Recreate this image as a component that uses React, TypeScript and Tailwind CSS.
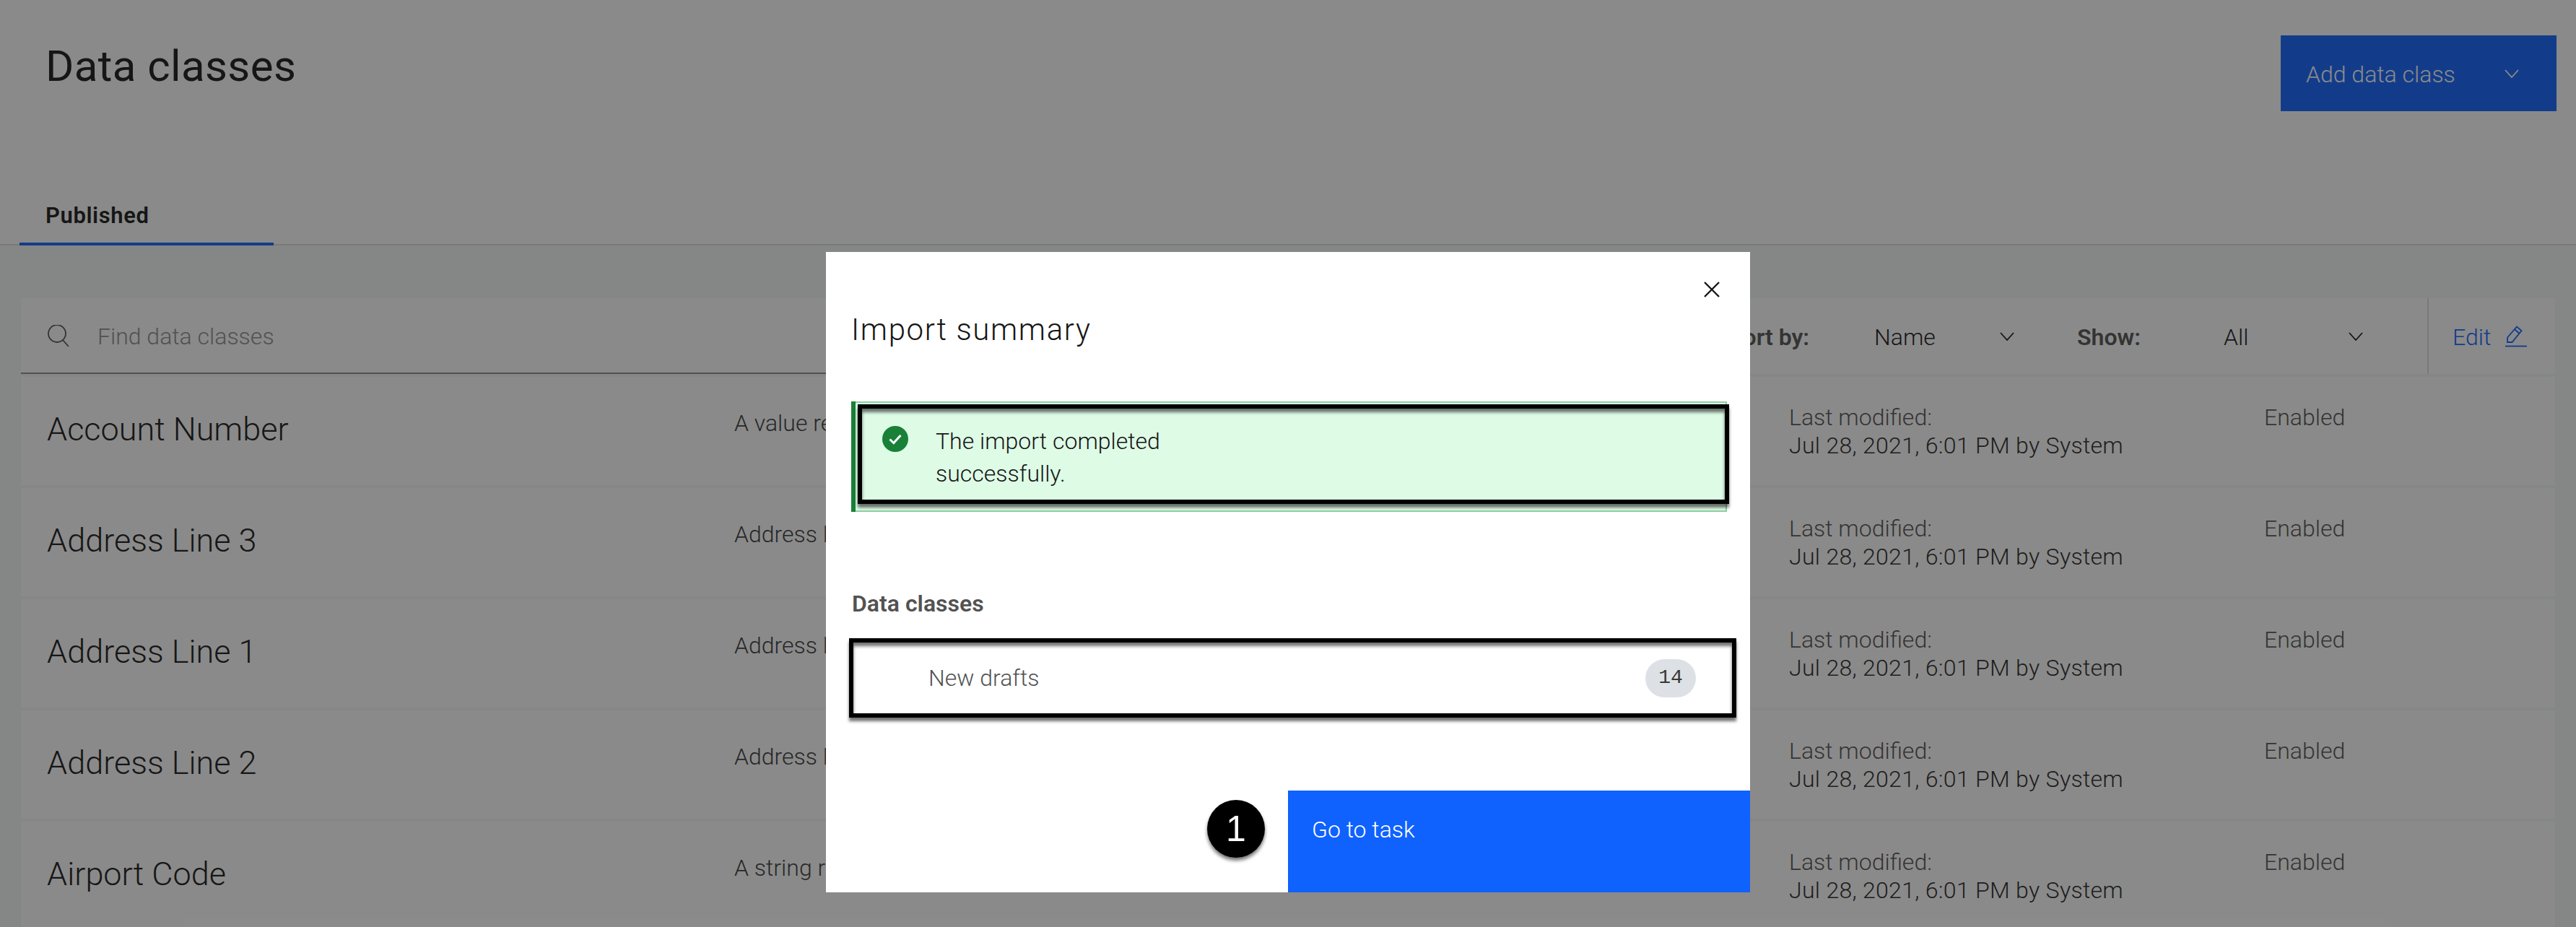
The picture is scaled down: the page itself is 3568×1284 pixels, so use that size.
const rows = [
  { name: 'Account Number', description: 'A value re' },
  { name: 'Address Line 3', description: 'Address l' },
  { name: 'Address Line 1', description: 'Address l' },
  { name: 'Address Line 2', description: 'Address l' },
  { name: 'Airport Code', description: 'A string r' },
];

function Chevron({ className }: { className: string }) {
  return (
    <svg viewBox="0 0 20 12" className={className} fill="none" stroke="currentColor" strokeWidth="1.8">
      <polyline points="1,1 10,11 19,1" />
    </svg>
  );
}

function Row({ name, description }: { name: string; description: string }) {
  return (
    <div className="flex h-[150px] bg-white pl-[36px] shrink-0">
      <div className="w-[952px] pt-[48px] text-[45px] leading-[50px] text-[#161616]">{name}</div>
      <div className="w-[1461px] pt-[46px] text-[32px] leading-[36px] text-[#393939]">{description}</div>
      <div className="w-[658px] pt-[37px] text-[32px] leading-[39px]">
        <div className="text-[#525252]">Last modified:</div>
        <div className="text-[#262626] tracking-[0.3px]">Jul 28, 2021, 6:01 PM by System</div>
      </div>
      <div className="pt-[37px] text-[32px] leading-[39px] text-[#525252]">Enabled</div>
    </div>
  );
}

function Page() {
  return (
    <div className="flex flex-col h-[1284px] bg-[#f4f8f6]">
      {/* Header */}
      <div className="relative h-[340px] shrink-0 bg-white border-b-2 border-[#dcdcdc]">
        <div className="flex justify-between pl-[63px] pr-[27px] pt-[49px]">
          <h1 className="pt-[8px] text-[60px] leading-[70px] font-normal text-[#161616] tracking-[0.4px]">Data classes</h1>
          <div className="flex items-center justify-between w-[382px] h-[105px] bg-[#0f62fe] pl-[35px] pr-[52px] text-[32px] text-white">
            <span className="pt-[2px]">Add data class</span>
            <Chevron className="w-[20px] h-[12px]" />
          </div>
        </div>
        <div className="absolute left-[27px] bottom-[-2px] w-[352px] h-[86px] border-b-[4px] border-[#0f62fe] pl-[36px] pt-[25px] text-[31px] leading-[40px] font-semibold text-[#161616] tracking-[0.6px]">
          Published
        </div>
      </div>

      {/* Table */}
      <div className="flex flex-col gap-[4px] mx-[29px] mt-[73px] min-h-0 overflow-hidden">
        <div className="flex h-[105px] shrink-0 items-center bg-white text-[32px] leading-[40px]">
          <div className="flex items-center h-full w-[2366px] border-b-[2px] border-[#8d8d8d] pl-[37px] text-[#8d8d8d]">
            <svg viewBox="0 0 30 30" className="w-[30px] h-[30px] mr-[39px] text-[#525252]" fill="none" stroke="currentColor" strokeWidth="1.8">
              <circle cx="13" cy="12" r="12" />
              <line x1="21" y1="21" x2="29" y2="30" />
            </svg>
            <span className="pt-[2px]">Find data classes</span>
          </div>
          <div className="w-[201px] pt-[2px] font-semibold text-[#525252]">Sort by:</div>
          <div className="flex items-center w-[281px] text-[#161616]">
            <span className="w-[174px] pt-[2px]">Name</span>
            <Chevron className="w-[20px] h-[12px]" />
          </div>
          <div className="w-[203px] pt-[2px] font-semibold text-[#525252]">Show:</div>
          <div className="flex items-center w-[282px] text-[#161616]">
            <span className="w-[173px] pt-[2px]">All</span>
            <Chevron className="w-[20px] h-[12px]" />
          </div>
          <div className="flex items-center h-full border-l-2 border-[#dcdcdc] pl-[33px] text-[#0f62fe]">
            <span className="mr-[20px] pt-[2px]">Edit</span>
            <svg viewBox="0 0 30 30" className="w-[30px] h-[30px]" fill="none" stroke="currentColor" strokeWidth="1.8">
              <path d="M0 28.5H30" />
              <path d="M3 23V16.5L16 1.5L22.5 7L9.5 23Z" />
              <path d="M13 5L19.5 11" />
            </svg>
          </div>
        </div>
        {rows.map((row) => (
          <Row key={row.name} name={row.name} description={row.description} />
        ))}
      </div>
    </div>
  );
}

function Modal() {
  return (
    <div className="absolute left-[1144px] top-[349px] flex flex-col w-[1280px] h-[887px] bg-white">
      <svg viewBox="0 0 22 22" className="absolute right-[42px] top-[41px] w-[22px] h-[22px] text-[#161616]" fill="none" stroke="currentColor" strokeWidth="2.4">
        <path d="M1 1L21 21M21 1L1 21" />
      </svg>

      <h2 className="pl-[35px] pt-[83px] text-[42px] leading-[50px] font-light text-[#161616] tracking-[1.6px]">Import summary</h2>

      {/* Notification */}
      <div className="relative ml-[35px] mt-[74px] w-[1213px] h-[153px] bg-[#defbe6] border-l-[6px] border-[#198038] shrink-0">
        <div className="absolute inset-0 border-y-2 border-r-2 border-[#8fcfa3]" />
        <div className="flex pl-[37px] pt-[33px]">
          <svg viewBox="0 0 36 36" className="w-[36px] h-[36px] mt-[1px] mr-[38px] shrink-0">
            <circle cx="18" cy="18" r="18" fill="#198038" />
            <path d="M10.5 18.5L15.8 23.5L25.5 13" fill="none" stroke="#fff" strokeWidth="3" />
          </svg>
          <p className="w-[400px] text-[32px] leading-[45px] text-[#161616]">The import completed successfully.</p>
        </div>
        <div className="absolute left-[3px] top-[4px] w-[1207px] h-[138px] border-[6px] border-black shadow-[0_5px_4px_rgba(0,0,0,0.55),inset_0_5px_4px_rgba(0,0,0,0.55)]" />
      </div>

      <h3 className="pl-[36px] pt-[107px] text-[32px] leading-[40px] font-semibold text-[#525252]">Data classes</h3>

      {/* Group row */}
      <div className="relative ml-[32px] mt-[28px] w-[1229px] h-[110px] shrink-0 flex items-center justify-between pl-[104px] pr-[50px] border-[6px] border-black shadow-[0_5px_4px_rgba(0,0,0,0.55),inset_0_5px_4px_rgba(0,0,0,0.55)]">
        <span className="text-[32px] text-[#525252]">New drafts</span>
        <span className="flex items-center justify-center w-[70px] h-[53px] rounded-full bg-[#dde1e6] text-[28px] text-[#393939] font-['Liberation_Mono',monospace]">14</span>
      </div>

      {/* Footer */}
      <div className="relative flex mt-auto h-[141px] shrink-0">
        <div className="w-[640px]" />
        <div className="w-[640px] bg-[#0f62fe] pl-[33px] pt-[34px] text-[32px] leading-[40px] text-white">Go to task</div>
        <div className="absolute left-[528px] top-[13px] flex items-center justify-center w-[80px] h-[80px] rounded-full bg-black text-[50px] text-white font-['Liberation_Sans',sans-serif] shadow-[0_4px_5px_rgba(0,0,0,0.55)]">
          1
        </div>
      </div>
    </div>
  );
}

export default function App() {
  return (
    <div className="relative w-[3568px] h-[1284px] overflow-hidden font-['Roboto','Noto_Sans',sans-serif] font-light">
      <Page />
      {/* Overlay */}
      <div className="absolute inset-0 bg-[#161616]/50" />
      <Modal />
    </div>
  );
}
